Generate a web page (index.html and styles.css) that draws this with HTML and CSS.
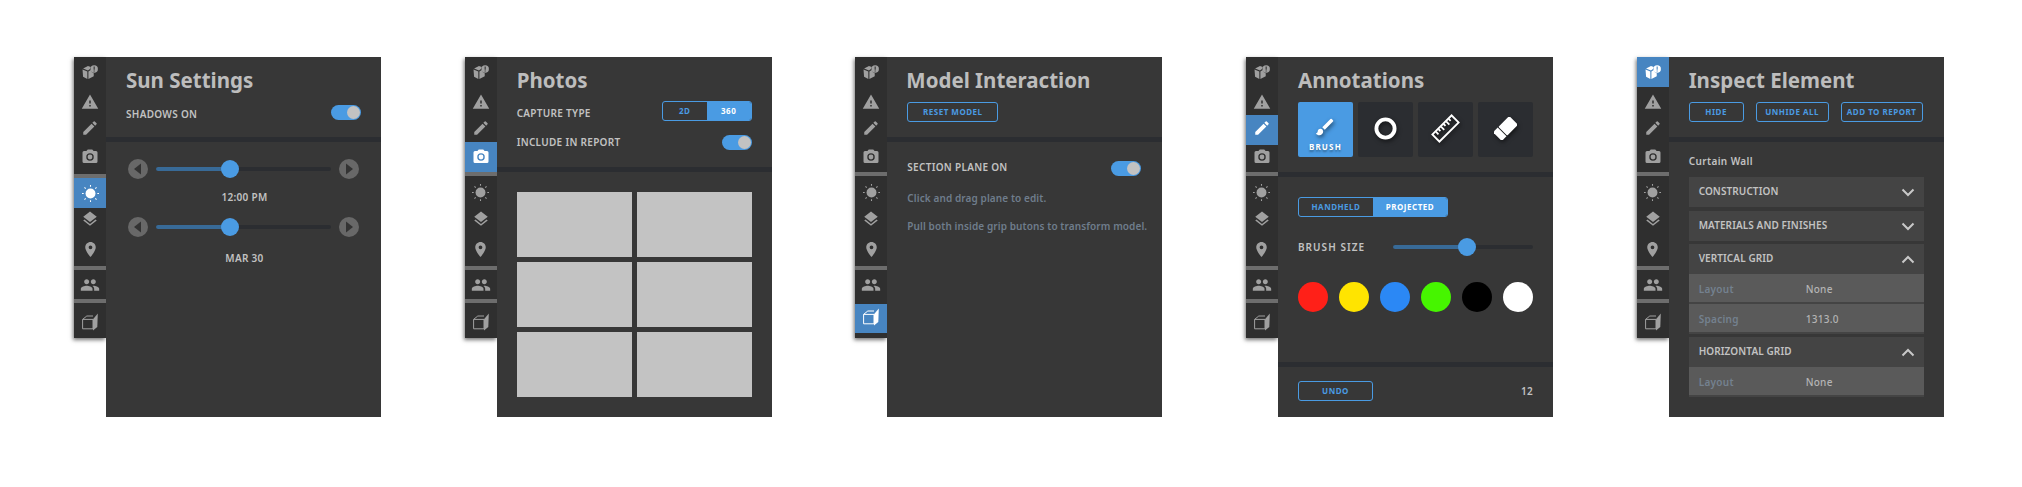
FILE: index.html
```html
<!DOCTYPE html>
<html lang="en">
<head>
<meta charset="utf-8">
<title>VR panels</title>
<link rel="stylesheet" href="styles.css">
</head>
<body>
<svg class="defs" aria-hidden="true">
  <defs>
    <symbol id="i-info" viewBox="0 0 15 13">
      <path d="M5.600 .8 8.300 1.900A4 4 0 0 0 7.500 3.800L5.600 5 1 3.200zM.5 4.200 5 6v7L1 11zM6 6 8.200 4.600A4 4 0 0 0 11 7.700V10.500L6 13z"/>
      <path fill-rule="evenodd" d="M11.400.2a3.500 3.500 0 1 1 0 7 3.500 3.500 0 0 1 0-7zM10.900 1.400v3h1v-3zM10.900 5v1h1v-1z"/>
    </symbol>
    <symbol id="i-warn" viewBox="0 0 24 24"><path d="M1 21h22L12 2 1 21zm12-3h-2v-2h2v2zm0-4h-2v-4h2v4z"/></symbol>
    <symbol id="i-pen" viewBox="0 0 24 24"><path d="M3 17.250V21h3.750L17.810 9.940l-3.750-3.750L3 17.250zM20.710 7.040a1 1 0 0 0 0-1.410l-2.340-2.340a1 1 0 0 0-1.410 0l-1.830 1.830 3.750 3.750 1.830-1.830z"/></symbol>
    <symbol id="i-cam" viewBox="0 0 24 24"><circle cx="12" cy="12" r="3.200"/><path fill-rule="evenodd" d="M9 2 7.170 4H4a2 2 0 0 0-2 2v12a2 2 0 0 0 2 2h16a2 2 0 0 0 2-2V6a2 2 0 0 0-2-2h-3.170L15 2H9zm3 15a5 5 0 1 1 0-10 5 5 0 0 1 0 10z"/></symbol>
    <symbol id="i-sun" viewBox="0 0 24 24">
      <circle cx="12" cy="12" r="7"/>
      <path fill="none" stroke="currentColor" stroke-width="1.500" d="M12 0v2.400M12 21.600v2.400M0 12h2.400M21.600 12h2.400M3.500 3.500l1.700 1.700M18.800 18.800l1.700 1.700M3.500 20.500l1.700-1.700M18.800 5.200l1.700-1.700"/>
    </symbol>
    <symbol id="i-lay" viewBox="0 0 24 24"><path d="M11.990 18.540l-7.370-5.730L3 14.070l9 7 9-7-1.630-1.270-7.380 5.740zM12 16l7.360-5.730L21 9l-9-7-9 7 1.630 1.270L12 16z"/></symbol>
    <symbol id="i-pin" viewBox="5 2 14 20"><path d="M12 2C8.130 2 5 5.130 5 9c0 5.250 7 13 7 13s7-7.750 7-13c0-3.870-3.130-7-7-7zm0 9.500a2.500 2.500 0 0 1 0-5 2.500 2.500 0 0 1 0 5z"/></symbol>
    <symbol id="i-ppl" viewBox="0 0 24 24"><path d="M16 11c1.660 0 2.990-1.340 2.990-3S17.660 5 16 5c-1.660 0-3 1.340-3 3s1.340 3 3 3zm-8 0c1.660 0 2.990-1.340 2.990-3S9.660 5 8 5C6.340 5 5 6.340 5 8s1.340 3 3 3zm0 2c-2.330 0-7 1.170-7 3.500V19h14v-2.500c0-2.330-4.670-3.500-7-3.500zm8 0c-.29 0-.62.02-.97.05 1.160.84 1.970 1.970 1.970 3.450V19h6v-2.500c0-2.330-4.670-3.500-7-3.500z"/></symbol>
    <symbol id="i-box" viewBox="0 0 16 18">
      <path fill="none" stroke="currentColor" stroke-width="1" d="M.6 6.400 4.800 3H11M.6 6.400h10.400v9.400H.6z"/>
      <path d="M11 6.200 15.800.6l-.5 13.400-4.300 3.600z"/>
    </symbol>
    <symbol id="t-brush" viewBox="0 0 24 24"><path d="M7 14c-1.660 0-3 1.340-3 3 0 1.310-1.160 2-2 2 .92 1.220 2.490 2 4 2 2.210 0 4-1.790 4-4 0-1.660-1.340-3-3-3zm13.710-9.370-1.340-1.340a.996.996 0 0 0-1.410 0L9 12.250 11.750 15l8.960-8.960a.996.996 0 0 0 0-1.410z"/></symbol>
    <symbol id="t-ring" viewBox="0 0 24 24"><circle cx="12" cy="12" r="9.500" fill="none" stroke="currentColor" stroke-width="4"/></symbol>
    <symbol id="t-ruler" viewBox="0 0 32 32">
      <g transform="rotate(-45 16 16)" fill="none" stroke="currentColor" stroke-width="2">
        <rect x="1" y="10.500" width="30" height="11"/>
        <path d="M6 11v4M10 11v3M14 11v5M18 11v3M22 11v5M26 11v3"/>
      </g>
    </symbol>
    <symbol id="t-eraser" viewBox="0 0 24 24">
      <g transform="rotate(-45 12 12)">
        <rect x="0" y="5.500" width="7" height="13"/>
        <rect x="8" y="5.500" width="16" height="13" rx="1"/>
      </g>
    </symbol>
    <symbol id="chev-d" viewBox="0 0 14 9"><path fill="none" stroke="currentColor" stroke-width="2" d="M1.500 1.500 7 7l5.500-5.500"/></symbol>
    <symbol id="chev-u" viewBox="0 0 14 9"><path fill="none" stroke="currentColor" stroke-width="2" d="M1.500 7.500 7 2l5.500 5.500"/></symbol>
    <symbol id="tri-l" viewBox="0 0 20 20"><path d="M13 4.500v11L6 10z"/></symbol>
    <symbol id="tri-r" viewBox="0 0 20 20"><path d="M7 4.500v11L14 10z"/></symbol>
  </defs>
</svg>

<main class="stage">

  <section class="panel">
    <nav class="side">
      <div class="row r-info"><svg class="ic ic-info"><use href="#i-info"/></svg></div>
      <div class="row r-warn"><svg class="ic ic-warn"><use href="#i-warn"/></svg></div>
      <div class="row r-pen"><svg class="ic ic-pen"><use href="#i-pen"/></svg></div>
      <div class="row r-cam"><svg class="ic ic-cam"><use href="#i-cam"/></svg></div>
      <div class="sdiv sdiv-sun"></div>
      <div class="row r-sun active"><svg class="ic ic-sun"><use href="#i-sun"/></svg></div>
      <div class="row r-lay"><svg class="ic ic-lay"><use href="#i-lay"/></svg></div>
      <div class="row r-pin"><svg class="ic ic-pin"><use href="#i-pin"/></svg></div>
      <div class="sdiv"></div>
      <div class="row r-ppl"><svg class="ic ic-ppl"><use href="#i-ppl"/></svg></div>
      <div class="sdiv"></div>
      <div class="row r-box"><svg class="ic ic-box"><use href="#i-box"/></svg></div>
    </nav>
    <div class="main">
      <header class="head">
        <h1 class="title">Sun Settings</h1>
        <div class="line first">
          <span class="lbl lbl-low">SHADOWS ON</span>
          <span class="toggle"><span class="knob"></span></span>
        </div>
      </header>
      <div class="band"></div>
      <div class="sun-body">
        <div class="slider">
          <span class="step"><svg class="tri"><use href="#tri-l"/></svg></span>
          <span class="track"><span class="fill" style="width:42.3%"><span class="thumb"></span></span></span>
          <span class="step"><svg class="tri"><use href="#tri-r"/></svg></span>
        </div>
        <div class="cap cap-time">12:00 PM</div>
        <div class="slider slider-date">
          <span class="step"><svg class="tri"><use href="#tri-l"/></svg></span>
          <span class="track"><span class="fill" style="width:42.3%"><span class="thumb"></span></span></span>
          <span class="step"><svg class="tri"><use href="#tri-r"/></svg></span>
        </div>
        <div class="cap cap-date">MAR 30</div>
      </div>
    </div>
  </section>

  <section class="panel">
    <nav class="side">
      <div class="row r-info"><svg class="ic ic-info"><use href="#i-info"/></svg></div>
      <div class="row r-warn"><svg class="ic ic-warn"><use href="#i-warn"/></svg></div>
      <div class="row r-pen"><svg class="ic ic-pen"><use href="#i-pen"/></svg></div>
      <div class="row r-cam active"><svg class="ic ic-cam"><use href="#i-cam"/></svg></div>
      <div class="sdiv"></div>
      <div class="row r-sun"><svg class="ic ic-sun"><use href="#i-sun"/></svg></div>
      <div class="row r-lay"><svg class="ic ic-lay"><use href="#i-lay"/></svg></div>
      <div class="row r-pin"><svg class="ic ic-pin"><use href="#i-pin"/></svg></div>
      <div class="sdiv"></div>
      <div class="row r-ppl"><svg class="ic ic-ppl"><use href="#i-ppl"/></svg></div>
      <div class="sdiv"></div>
      <div class="row r-box"><svg class="ic ic-box"><use href="#i-box"/></svg></div>
    </nav>
    <div class="main">
      <header class="head">
        <h1 class="title">Photos</h1>
        <div class="line first-seg">
          <span class="lbl lbl-low">CAPTURE TYPE</span>
          <span class="seg seg-small"><span class="seg-cell">2D</span><span class="seg-cell on">360</span></span>
        </div>
        <div class="line second">
          <span class="lbl">INCLUDE IN REPORT</span>
          <span class="toggle"><span class="knob"></span></span>
        </div>
      </header>
      <div class="band"></div>
      <div class="photos">
        <div class="photo"></div><div class="photo"></div>
        <div class="photo"></div><div class="photo"></div>
        <div class="photo"></div><div class="photo"></div>
      </div>
    </div>
  </section>

  <section class="panel">
    <nav class="side">
      <div class="row r-info"><svg class="ic ic-info"><use href="#i-info"/></svg></div>
      <div class="row r-warn"><svg class="ic ic-warn"><use href="#i-warn"/></svg></div>
      <div class="row r-pen"><svg class="ic ic-pen"><use href="#i-pen"/></svg></div>
      <div class="row r-cam"><svg class="ic ic-cam"><use href="#i-cam"/></svg></div>
      <div class="sdiv"></div>
      <div class="row r-sun"><svg class="ic ic-sun"><use href="#i-sun"/></svg></div>
      <div class="row r-lay"><svg class="ic ic-lay"><use href="#i-lay"/></svg></div>
      <div class="row r-pin"><svg class="ic ic-pin"><use href="#i-pin"/></svg></div>
      <div class="sdiv"></div>
      <div class="row r-ppl"><svg class="ic ic-ppl"><use href="#i-ppl"/></svg></div>
      <div class="sdiv sdiv-box"></div>
      <div class="row r-box active"><svg class="ic ic-box"><use href="#i-box"/></svg></div>
    </nav>
    <div class="main">
      <header class="head">
        <h1 class="title title-model">Model Interaction</h1>
        <div class="btns">
          <button class="btn btn-reset">RESET MODEL</button>
        </div>
      </header>
      <div class="band"></div>
      <div class="model-body">
        <div class="line">
          <span class="lbl lbl-high">SECTION PLANE ON</span>
          <span class="toggle"><span class="knob"></span></span>
        </div>
        <p class="hint hint-a">Click and drag plane to edit.</p>
        <p class="hint hint-b">Pull both inside grip butons to transform model.</p>
      </div>
    </div>
  </section>

  <section class="panel">
    <nav class="side">
      <div class="row r-info"><svg class="ic ic-info"><use href="#i-info"/></svg></div>
      <div class="row r-warn"><svg class="ic ic-warn"><use href="#i-warn"/></svg></div>
      <div class="row r-pen active"><svg class="ic ic-pen"><use href="#i-pen"/></svg></div>
      <div class="row r-cam"><svg class="ic ic-cam"><use href="#i-cam"/></svg></div>
      <div class="sdiv"></div>
      <div class="row r-sun"><svg class="ic ic-sun"><use href="#i-sun"/></svg></div>
      <div class="row r-lay"><svg class="ic ic-lay"><use href="#i-lay"/></svg></div>
      <div class="row r-pin"><svg class="ic ic-pin"><use href="#i-pin"/></svg></div>
      <div class="sdiv"></div>
      <div class="row r-ppl"><svg class="ic ic-ppl"><use href="#i-ppl"/></svg></div>
      <div class="sdiv"></div>
      <div class="row r-box"><svg class="ic ic-box"><use href="#i-box"/></svg></div>
    </nav>
    <div class="main">
      <header class="head">
        <h1 class="title">Annotations</h1>
        <div class="tools">
          <div class="tool on"><svg class="tool-ic ti-brush"><use href="#t-brush"/></svg><span class="tool-lbl">BRUSH</span></div>
          <div class="tool"><svg class="tool-ic ti-ring"><use href="#t-ring"/></svg></div>
          <div class="tool"><svg class="tool-ic ti-ruler"><use href="#t-ruler"/></svg></div>
          <div class="tool"><svg class="tool-ic ti-eraser"><use href="#t-eraser"/></svg></div>
        </div>
      </header>
      <div class="band"></div>
      <div class="anno-body">
        <span class="seg seg-wide"><span class="seg-cell">HANDHELD</span><span class="seg-cell on">PROJECTED</span></span>
        <div class="brush-row">
          <span class="lbl lbl-wide">BRUSH SIZE</span>
          <span class="track track-brush"><span class="fill" style="width:52.9%"><span class="thumb"></span></span></span>
        </div>
        <div class="swatches">
          <span class="swatch c-red"></span>
          <span class="swatch c-yellow"></span>
          <span class="swatch c-blue"></span>
          <span class="swatch c-green"></span>
          <span class="swatch c-black"></span>
          <span class="swatch c-white"></span>
        </div>
      </div>
      <div class="band"></div>
      <div class="foot">
        <button class="btn btn-undo">UNDO</button>
        <span class="count">12</span>
      </div>
    </div>
  </section>

  <section class="panel">
    <nav class="side">
      <div class="row r-info active"><svg class="ic ic-info"><use href="#i-info"/></svg></div>
      <div class="row r-warn"><svg class="ic ic-warn"><use href="#i-warn"/></svg></div>
      <div class="row r-pen"><svg class="ic ic-pen"><use href="#i-pen"/></svg></div>
      <div class="row r-cam"><svg class="ic ic-cam"><use href="#i-cam"/></svg></div>
      <div class="sdiv"></div>
      <div class="row r-sun"><svg class="ic ic-sun"><use href="#i-sun"/></svg></div>
      <div class="row r-lay"><svg class="ic ic-lay"><use href="#i-lay"/></svg></div>
      <div class="row r-pin"><svg class="ic ic-pin"><use href="#i-pin"/></svg></div>
      <div class="sdiv"></div>
      <div class="row r-ppl"><svg class="ic ic-ppl"><use href="#i-ppl"/></svg></div>
      <div class="sdiv"></div>
      <div class="row r-box"><svg class="ic ic-box"><use href="#i-box"/></svg></div>
    </nav>
    <div class="main">
      <header class="head">
        <h1 class="title">Inspect Element</h1>
        <div class="btns">
          <button class="btn btn-hide">HIDE</button>
          <button class="btn btn-unhide">UNHIDE ALL</button>
          <button class="btn btn-add">ADD TO REPORT</button>
        </div>
      </header>
      <div class="band"></div>
      <div class="inspect-body">
        <div class="element">Curtain Wall</div>
        <div class="accordion">
          <div class="acc acc-first">
            <div class="acc-head"><span>CONSTRUCTION</span><svg class="chev"><use href="#chev-d"/></svg></div>
          </div>
          <div class="acc">
            <div class="acc-head"><span>MATERIALS AND FINISHES</span><svg class="chev"><use href="#chev-d"/></svg></div>
          </div>
          <div class="acc open">
            <div class="acc-head"><span>VERTICAL GRID</span><svg class="chev"><use href="#chev-u"/></svg></div>
            <div class="prop"><span class="prop-k">Layout</span><span class="prop-v">None</span></div>
            <div class="prop"><span class="prop-k">Spacing</span><span class="prop-v">1313.0</span></div>
          </div>
          <div class="acc open">
            <div class="acc-head"><span>HORIZONTAL GRID</span><svg class="chev"><use href="#chev-u"/></svg></div>
            <div class="prop"><span class="prop-k">Layout</span><span class="prop-v">None</span></div>
          </div>
        </div>
      </div>
    </div>
  </section>

</main>
</body>
</html>
```

FILE: styles.css
```css
* { box-sizing: border-box; }

html, body {
  margin: 0;
  height: 487px;
  overflow: hidden;
  background: #fff;
}

body {
  font-family: "Noto Sans", "Open Sans", sans-serif;
  color: #c2c2c2;
}

.defs { display: none; }

.stage {
  display: flex;
  gap: 83.67px;
  padding: 57px 0 0 74px;
}

.panel {
  display: flex;
  align-items: flex-start;
  flex: none;
}

/* ---------- icon rail ---------- */
.side {
  width: 32px;
  height: 281px;
  display: flex;
  flex-direction: column;
  background: #2f2f2f;
  color: #a0a0a0;
  box-shadow: -1px 2px 4px rgba(0, 0, 0, .55);
}

.row {
  display: flex;
  align-items: center;
  justify-content: center;
  flex: none;
}

.row.active { background: #4785c1; color: #fff; }

.r-info { height: 30px; padding-bottom: 1px; }
.r-warn { height: 28px; padding-top: 1px; }
.r-pen  { height: 30px; padding-bottom: 5px; }
.r-cam  { height: 27px; padding-bottom: 3px; }
.r-cam.active { height: 30px; margin-top: -3px; padding-bottom: 0; }
.r-sun  { height: 32px; padding-top: 1px; }
.r-sun.active { height: 30px; margin-top: 2px; padding-top: 0; }
.r-lay  { height: 22px; }
.r-pin  { height: 36px; padding-top: 2px; }
.r-ppl  { height: 29px; }
.r-box  { height: 35px; padding-top: 2px; }
.r-box.active { height: 29px; margin-top: 1px; padding: 0 0 3px; }

.sdiv { height: 4px; flex: none; background: #6d6d6d; }
.sdiv-sun { margin: 2px 0 -2px; }
.sdiv-box { margin: 5px 0 -5px; }

.ic { fill: currentColor; color: inherit; display: block; }
.ic-info { width: 16px; height: 14px; }
.ic-warn { width: 18px; height: 18px; }
.ic-pen  { width: 18px; height: 18px; }
.ic-cam  { width: 18px; height: 18px; }
.ic-sun  { width: 17px; height: 17px; }
.ic-lay  { width: 18px; height: 18px; }
.ic-pin  { width: 11px; height: 15px; }
.ic-ppl  { width: 20px; height: 20px; }
.ic-box  { width: 16px; height: 18px; }

/* ---------- main card ---------- */
.main {
  position: relative;
  width: 275px;
  height: 360px;
  background: #373737;
  flex: none;
}

.head { padding: 9px 20px 15px; }

.title {
  margin: 0;
  font-size: 20.5px;
  line-height: 28px;
  font-weight: 700;
  color: #bdbdbd;
  white-space: nowrap;
}

.title-model { margin-left: -1px; }

.band { height: 5px; background: #2b2d31; }

.line {
  display: flex;
  align-items: center;
  justify-content: space-between;
  height: 20px;
}

.line.first { margin-top: 8px; }
.line.first-seg { margin-top: 7px; }
.line.second { margin-top: 11px; }

.lbl {
  font-size: 10px;
  line-height: 16px;
  font-weight: 600;
  letter-spacing: .3px;
  color: #c2c2c2;
  white-space: nowrap;
}

.lbl-low { padding-top: 4px; }
.lbl-high { padding-bottom: 3px; }
.lbl-wide { letter-spacing: 1.05px; }

.toggle {
  display: flex;
  justify-content: flex-end;
  align-items: center;
  width: 30px;
  height: 15px;
  padding-right: 1px;
  border-radius: 8px;
  background: #4a9be3;
}

.knob {
  width: 13px;
  height: 13px;
  border-radius: 50%;
  background: #c2c2c2;
}

/* ---------- sliders ---------- */
.sun-body { padding-top: 17px; }

.slider {
  display: flex;
  align-items: center;
  gap: 8px;
  height: 20px;
  padding: 0 22px;
}

.slider-date { margin-top: 10px; }

.step {
  width: 20px;
  height: 20px;
  flex: none;
  border-radius: 50%;
  background: #686868;
}

.tri { display: block; width: 20px; height: 20px; fill: #333; }

.track {
  display: block;
  flex: 1;
  height: 4px;
  border-radius: 2px;
  background: #2b2d31;
}

.fill {
  display: block;
  position: relative;
  height: 4px;
  border-radius: 2px 0 0 2px;
  background: #386a97;
}

.thumb {
  position: absolute;
  right: -9px;
  top: -7px;
  width: 18px;
  height: 18px;
  border-radius: 50%;
  background: #4a9be3;
}

.cap {
  font-size: 10px;
  line-height: 20px;
  font-weight: 600;
  letter-spacing: .3px;
  text-align: center;
  color: #c2c2c2;
  padding-left: 2px;
}

.cap-time { margin-top: 8px; }
.cap-date { margin-top: 11px; }

/* ---------- segmented ---------- */
.seg {
  display: flex;
  height: 20px;
  border: 1px solid #4a9be3;
  border-radius: 3px;
  overflow: hidden;
}

.seg-small { width: 90px; }
.seg-wide { width: 150px; }

.seg-cell {
  flex: 1;
  text-align: center;
  font-size: 8px;
  line-height: 18px;
  font-weight: 700;
  letter-spacing: .5px;
  color: #4a9be3;
}

.seg-cell.on { background: #4a9be3; color: #fff; }

/* ---------- photos ---------- */
.photos {
  display: grid;
  grid-template-columns: 115.3px 115.3px;
  grid-auto-rows: 65px;
  gap: 5px;
  padding: 20px 0 0 20px;
}

.photo { background: #c3c3c3; }

/* ---------- buttons ---------- */
.btns {
  display: flex;
  gap: 12px;
  margin-top: 8px;
}

.btn {
  height: 20px;
  padding: 0;
  font-family: inherit;
  font-size: 8px;
  line-height: 18px;
  font-weight: 700;
  letter-spacing: .5px;
  color: #4a9be3;
  background: transparent;
  border: 1px solid #4a9be3;
  border-radius: 3px;
  white-space: nowrap;
}

.btn-reset { width: 91px; }
.btn-hide { width: 55px; }
.btn-unhide { width: 73px; }
.btn-add { width: 82px; }
.btn-undo { width: 75px; }

/* ---------- model ---------- */
.model-body { padding: 16px 21px 0 20px; }

.hint {
  margin: 0;
  font-size: 10px;
  line-height: 20px;
  font-weight: 600;
  letter-spacing: .1px;
  color: #6f7d8c;
  white-space: nowrap;
}

.hint-a { margin-top: 10px; }
.hint-b { margin-top: 8px; }

/* ---------- annotations ---------- */
.tools {
  display: flex;
  gap: 5px;
  margin-top: 8px;
}

.tool {
  display: flex;
  flex-direction: column;
  align-items: center;
  justify-content: center;
  width: 55px;
  height: 55px;
  border-radius: 2px;
  background: #2b2d31;
  color: #fff;
}

.tool.on { background: #4a9be3; justify-content: flex-start; padding-top: 14px; }

.tool-ic {
  display: block;
  fill: currentColor;
  filter: drop-shadow(1px 2px 2px rgba(0, 0, 0, .55));
}

.ti-brush { width: 22px; height: 22px; }
.ti-ring { width: 23px; height: 23px; margin-bottom: 3px; }
.ti-ruler { width: 29px; height: 29px; margin-bottom: 3px; }
.ti-eraser { width: 23px; height: 23px; margin-bottom: 3px; }

.tool-lbl {
  font-size: 8px;
  line-height: 12px;
  font-weight: 700;
  letter-spacing: 1.2px;
  margin-top: 3px;
  color: #fff;
  text-shadow: 0 2px 2px rgba(0, 0, 0, .35);
}

.anno-body {
  height: 185px;
  padding: 20px 20px 0;
}

.brush-row {
  display: flex;
  align-items: center;
  height: 20px;
  margin-top: 20px;
}

.track-brush { flex: none; width: 140px; margin-left: auto; }

.swatches {
  display: flex;
  gap: 11px;
  margin-top: 25px;
}

.swatch {
  width: 30px;
  height: 30px;
  border-radius: 50%;
}

.c-red { background: #ff2018; }
.c-yellow { background: #ffe400; }
.c-blue { background: #2b88f5; }
.c-green { background: #46f500; }
.c-black { background: #000; }
.c-white { background: #fff; }

.foot {
  display: flex;
  align-items: center;
  justify-content: space-between;
  padding: 14px 20px 0;
}

.count {
  font-size: 10px;
  font-weight: 600;
  letter-spacing: .3px;
  color: #c2c2c2;
}

/* ---------- inspect ---------- */
.inspect-body { padding: 9px 20px 0; }

.element {
  font-size: 10px;
  line-height: 20px;
  font-weight: 600;
  letter-spacing: .4px;
  color: #c2c2c2;
}

.accordion {
  display: flex;
  flex-direction: column;
  gap: 3px;
  margin-top: 6px;
}

.acc { background: #444; }
.acc-first { margin-bottom: 1px; }
.acc.open { padding-bottom: 2px; }

.acc-head {
  display: flex;
  align-items: center;
  justify-content: space-between;
  height: 30px;
  padding: 0 9px 0 10px;
  font-size: 10px;
  font-weight: 600;
  letter-spacing: .1px;
  color: #c2c2c2;
}

.acc-head span { padding-bottom: 2px; }

.chev { width: 14px; height: 9px; color: #c8c8c8; display: block; }

.prop {
  display: flex;
  align-items: center;
  height: 28px;
  padding: 2px 0 0 10px;
  background: #5a5a5a;
  font-size: 10px;
  font-weight: 500;
  letter-spacing: .3px;
}

.prop + .prop { margin-top: 2px; }

.prop-k {
  width: 107px;
  font-weight: 600;
  color: #74818f;
}

.prop-v { color: #b4b4b4; }
```
